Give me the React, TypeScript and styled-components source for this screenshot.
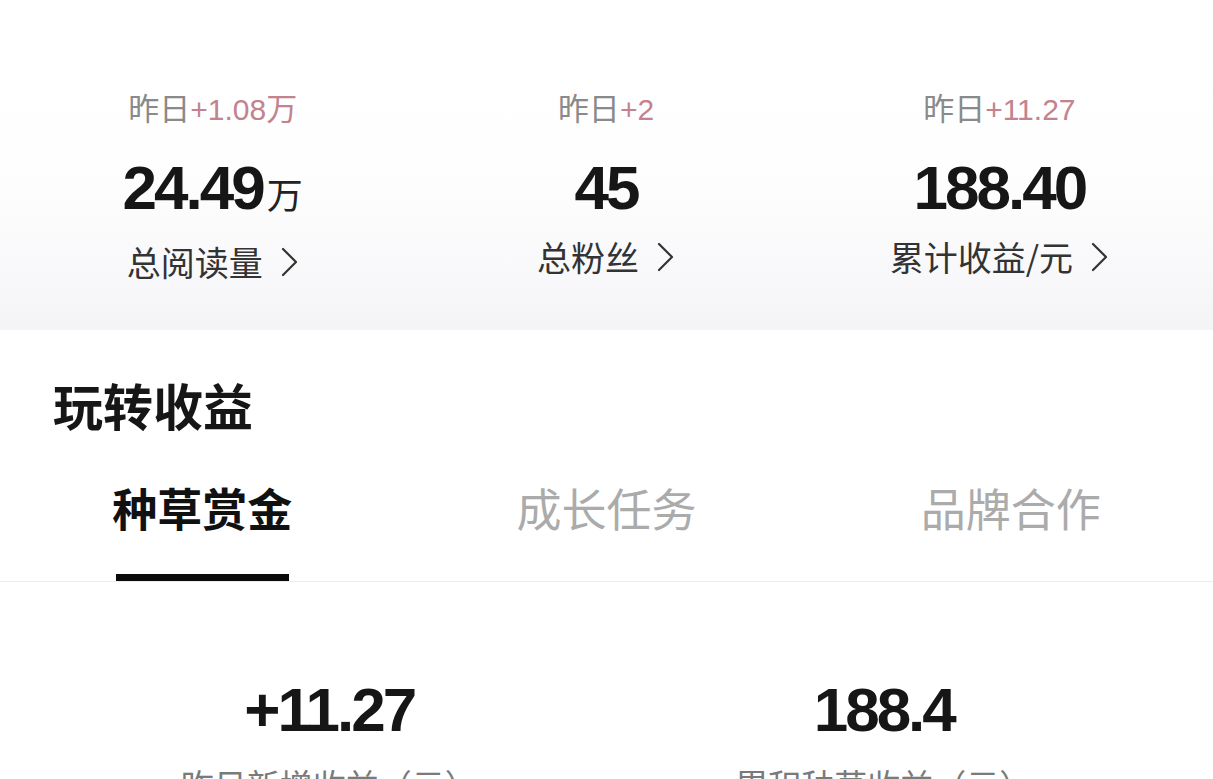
import React from "react";
import styled, { createGlobalStyle } from "styled-components";

const GlobalStyle = createGlobalStyle`
  html, body {
    margin: 0;
    padding: 0;
    background: #ffffff;
    overflow: hidden;
  }
  body {
    font-family: "Noto Sans CJK SC", "Noto Sans", sans-serif;
    color: #161616;
  }
  * { box-sizing: border-box; }
`;

const Page = styled.div`
  width: 1213px;
  height: 779px;
  overflow: hidden;
  display: flex;
  flex-direction: column;
`;

const StatsBand = styled.section`
  flex: none;
  height: 330px;
  padding: 87px 17px 0 16px;
  background: linear-gradient(180deg, #ffffff 0%, #fefefe 50%, #f8f8fa 85%, #f4f4f7 100%);
  display: grid;
  grid-template-columns: repeat(3, 1fr);
  align-items: start;
`;

const StatCol = styled.div`
  display: flex;
  flex-direction: column;
  align-items: center;
`;

const Yesterday = styled.div`
  font-size: 31px;
  line-height: 40px;
  color: #8a8a8a;
  white-space: nowrap;
`;

const Delta = styled.span`
  color: #c2838f;
  font-family: "Liberation Sans", "Noto Sans CJK SC", sans-serif;
  font-size: 30px;
`;

const DeltaUnit = styled.span`
  color: #c2838f;
`;

const BigNumber = styled.div`
  margin-top: 23px;
  font-family: "Liberation Sans", Arial, sans-serif;
  font-weight: 700;
  font-size: 62px;
  line-height: 70px;
  letter-spacing: -3px;
  color: #161616;
  white-space: nowrap;
  display: flex;
  align-items: baseline;
`;

const Unit = styled.span`
  font-family: "Noto Sans CJK SC", sans-serif;
  font-weight: 400;
  font-size: 36px;
  letter-spacing: 0;
  margin-left: 4px;
  color: #222;
`;

const StatLabel = styled.div`
  margin-top: 14px;
  font-size: 34px;
  line-height: 40px;
  color: #333333;
  display: flex;
  align-items: center;
  white-space: nowrap;
`;

const Chevron = styled.svg`
  width: 18px;
  height: 30px;
  margin-left: 18px;
  flex: none;
`;

const Card = styled.section`
  flex: none;
  background: #ffffff;
  display: flex;
  flex-direction: column;
`;

const SectionTitle = styled.h2`
  margin: 44px 0 0 53px;
  font-size: 50px;
  line-height: 60px;
  font-weight: 700;
  color: #161616;
`;

const Tabs = styled.div`
  margin-top: 46px;
  display: grid;
  grid-template-columns: repeat(3, 1fr);
  border-bottom: 1px solid #ececec;
`;

const Tab = styled.div`
  display: flex;
  flex-direction: column;
  align-items: center;
`;

const TabText = styled.div<{ $active?: boolean }>`
  font-size: 45px;
  line-height: 56px;
  font-weight: ${(p) => (p.$active ? 700 : 400)};
  color: ${(p) => (p.$active ? "#111111" : "#ababab")};
  white-space: nowrap;
`;

const TabBar = styled.div<{ $active?: boolean }>`
  margin-top: 38px;
  width: 173px;
  height: 7px;
  background: ${(p) => (p.$active ? "#0a0a0a" : "transparent")};
`;

const Earnings = styled.div`
  margin-top: 93px;
  padding: 0 52px;
  display: grid;
  grid-template-columns: repeat(2, 1fr);
`;

const EarnCol = styled.div`
  display: flex;
  flex-direction: column;
  align-items: center;
`;

const EarnNumber = styled(BigNumber)`
  margin-top: 0;
`;

const EarnLabel = styled.div`
  margin-top: 17px;
  font-size: 33px;
  line-height: 44px;
  color: #7a7a7a;
  white-space: nowrap;
`;

const ChevronIcon = () => (
  <Chevron viewBox="0 0 18 30" fill="none">
    <path d="M2 2 L15 15 L2 28" stroke="#333" strokeWidth="2.2" strokeLinecap="round" strokeLinejoin="round" />
  </Chevron>
);

const stats = [
  { delta: "+1.08", deltaUnit: "万", value: "24.49", unit: "万", label: "总阅读量" },
  { delta: "+2", deltaUnit: "", value: "45", unit: "", label: "总粉丝" },
  { delta: "+11.27", deltaUnit: "", value: "188.40", unit: "", label: "累计收益/元" },
];

const tabs = [
  { name: "种草赏金", active: true },
  { name: "成长任务", active: false },
  { name: "品牌合作", active: false },
];

const earnings = [
  { value: "+11.27", label: "昨日新增收益（元）" },
  { value: "188.4", label: "累积种草收益（元）" },
];

export default function App() {
  return (
    <>
      <GlobalStyle />
      <Page>
        <StatsBand>
          {stats.map((s) => (
            <StatCol key={s.label}>
              <Yesterday>
                昨日<Delta>{s.delta}</Delta>
                {s.deltaUnit && <DeltaUnit>{s.deltaUnit}</DeltaUnit>}
              </Yesterday>
              <BigNumber>
                {s.value}
                {s.unit && <Unit>{s.unit}</Unit>}
              </BigNumber>
              <StatLabel>
                {s.label}
                <ChevronIcon />
              </StatLabel>
            </StatCol>
          ))}
        </StatsBand>
        <Card>
          <SectionTitle>玩转收益</SectionTitle>
          <Tabs>
            {tabs.map((t) => (
              <Tab key={t.name}>
                <TabText $active={t.active}>{t.name}</TabText>
                <TabBar $active={t.active} />
              </Tab>
            ))}
          </Tabs>
          <Earnings>
            {earnings.map((e) => (
              <EarnCol key={e.label}>
                <EarnNumber>{e.value}</EarnNumber>
                <EarnLabel>{e.label}</EarnLabel>
              </EarnCol>
            ))}
          </Earnings>
        </Card>
      </Page>
    </>
  );
}
